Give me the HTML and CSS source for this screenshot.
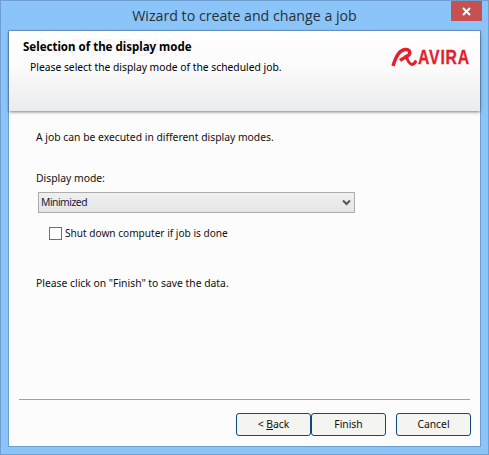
FILE: index.html
```html
<!DOCTYPE html>
<html lang="en">
<head>
    <meta charset="UTF-8">
    <meta name="viewport" content="width=device-width, initial-scale=1.0">
    <title>Wizard to create and change a job</title>
    <link rel="stylesheet" href="styles.css">
</head>
<body>
    <div class="window">
        <div class="titlebar">
            <div class="title">Wizard to create and change a job</div>
            <div class="close">
                <svg width="9" height="9" viewBox="0 0 9 9"><path d="M1 1 L8 8 M8 1 L1 8" stroke="#fff" stroke-width="2"/></svg>
            </div>
        </div>
        <div class="client">
            <!-- Header band -->
            <div class="header">
                <div class="watermark">SOFTPEDIA</div>
                <div class="header-text">
                    <div class="header-title">Selection of the display mode</div>
                    <div class="header-sub">Please select the display mode of the scheduled job.</div>
                </div>
                <div class="logo">
                    <svg class="logo-mark" width="26" height="20" viewBox="0 0 26 20">
                        <path d="M2 19 C4 12 8 3 14 2.5 C19.5 2 20 7 16.5 9 C14 10.5 11.5 11.5 9 13.5" fill="none" stroke="#e2202c" stroke-width="3.4"/>
                        <path d="M14.5 8 C16 12 18.5 17.5 21 17.5 C23 17.5 24.2 15.5 25.2 13.5" fill="none" stroke="#e2202c" stroke-width="3"/>
                    </svg>
                    <span class="logo-text">AVIRA</span>
                </div>
            </div>
            <!-- Form -->
            <div class="body">
                <p class="intro">A job can be executed in different display modes.</p>
                <div class="field-label">Display mode:</div>
                <div class="select">
                    <span class="select-value">Minimized</span>
                    <svg width="9" height="7" viewBox="0 0 9 7"><path d="M1 1.5 L4.5 5 L8 1.5" fill="none" stroke="#555" stroke-width="2"/></svg>
                </div>
                <label class="check"><input type="checkbox"> Shut down computer if job is done</label>
                <p class="hint">Please click on "Finish" to save the data.</p>
            </div>
            <!-- Footer -->
            <div class="footer">
                <div class="separator"></div>
                <div class="buttons">
                    <button class="btn">&lt; <u>B</u>ack</button>
                    <button class="btn">Finish</button>
                    <button class="btn btn-cancel">Cancel</button>
                </div>
            </div>
        </div>
    </div>
</body>
</html>
```

FILE: styles.css
```css
html, body {
    margin: 0;
    padding: 0;
}

body {
    width: 489px;
    height: 455px;
    overflow: hidden;
    font-family: 'Noto Sans', Tahoma, sans-serif;
    font-size: 10.35px;
    line-height: 15px;
    color: #111;
}

.window {
    box-sizing: border-box;
    width: 489px;
    height: 455px;
    background: #8ac4f8;
    border: 1px solid #6f9fd0;
    padding: 0 7px 7px 7px;
    display: flex;
    flex-direction: column;
}

.titlebar {
    height: 29px;
    flex: none;
    position: relative;
    display: flex;
    justify-content: center;
    align-items: center;
}

.title {
    font-family: 'Open Sans', sans-serif;
    font-size: 14.2px;
    color: #26303c;
    padding-bottom: 1px;
}

.close {
    position: absolute;
    top: 0;
    right: -1px;
    width: 31px;
    height: 20px;
    background: #c75050;
    display: flex;
    align-items: center;
    justify-content: center;
}

.client {
    flex: 1;
    display: flex;
    flex-direction: column;
    background: #fcfcfc;
    border: 1px solid #6f9fd0;
}

.header {
    height: 80px;
    flex: none;
    position: relative;
    display: flex;
    justify-content: space-between;
    background: linear-gradient(180deg, #fff 0%, #fbfbfb 45%, #ebecee 100%);
    box-shadow: 0 1px 3px rgba(0,0,0,0.5);
}

.header-text {
    position: relative;
    padding: 8px 0 0 14px;
}

.header-title {
    font-weight: bold;
    font-size: 11.5px;
    color: #000;
}

.header-sub {
    margin: 6px 0 0 7px;
    font-size: 10.3px;
    color: #000;
}

.logo {
    display: flex;
    align-items: center;
    height: 20px;
    margin: 16px 11px 0 0;
}

.logo-mark {
    margin-right: 1px;
}

.logo-text {
    display: inline-block;
    width: 51px;
    font-family: 'Liberation Sans', Arial, sans-serif;
    font-weight: bold;
    font-size: 19.5px;
    letter-spacing: 1px;
    color: #e2202c;
    -webkit-text-stroke: 0.3px #e2202c;
    transform: scaleX(.81);
    transform-origin: left center;
}

.watermark {
    position: absolute;
    left: 24px;
    top: 5px;
    font-family: 'Liberation Sans', Arial, sans-serif;
    font-weight: bold;
    font-size: 24px;
    line-height: 24px;
    letter-spacing: 1px;
    color: rgba(0,0,0,0.03);
}

.body {
    flex: 1;
    padding: 19px 0 0 27px;
}

.intro, .hint {
    margin: 0;
}

.field-label {
    margin-top: 26px;
}

.select {
    box-sizing: border-box;
    width: 317px;
    height: 21px;
    margin: 6px 0 0 2px;
    padding: 0 3px 0 2px;
    display: flex;
    align-items: center;
    justify-content: space-between;
    border: 1px solid #acacac;
    background: linear-gradient(180deg, #f0f0f0, #e5e5e5);
    color: #1a1a40;
}

.select-value {
    letter-spacing: -0.5px;
}

.check {
    display: flex;
    align-items: center;
    margin: 13px 0 0 13px;
    gap: 3px;
    font-size: 10.1px;
}

.check input {
    appearance: none;
    width: 13px;
    height: 13px;
    margin: 0;
    background: #fff;
    border: 1px solid #707070;
}

.hint {
    margin-top: 35px;
}

.footer {
    flex: none;
    padding: 0 10px 10px 10px;
}

.separator {
    height: 1px;
    background: #a0a0a0;
}

.buttons {
    display: flex;
    justify-content: flex-end;
    margin: 13px -1px 0 0;
}

.btn {
    box-sizing: border-box;
    width: 75px;
    height: 23px;
    padding: 0;
    font: inherit;
    color: #111;
    background: #f4f4f0;
    border: 1px solid #0e4a7e;
    border-radius: 3px;
}

.btn-cancel {
    margin-left: 10px;
}
```
